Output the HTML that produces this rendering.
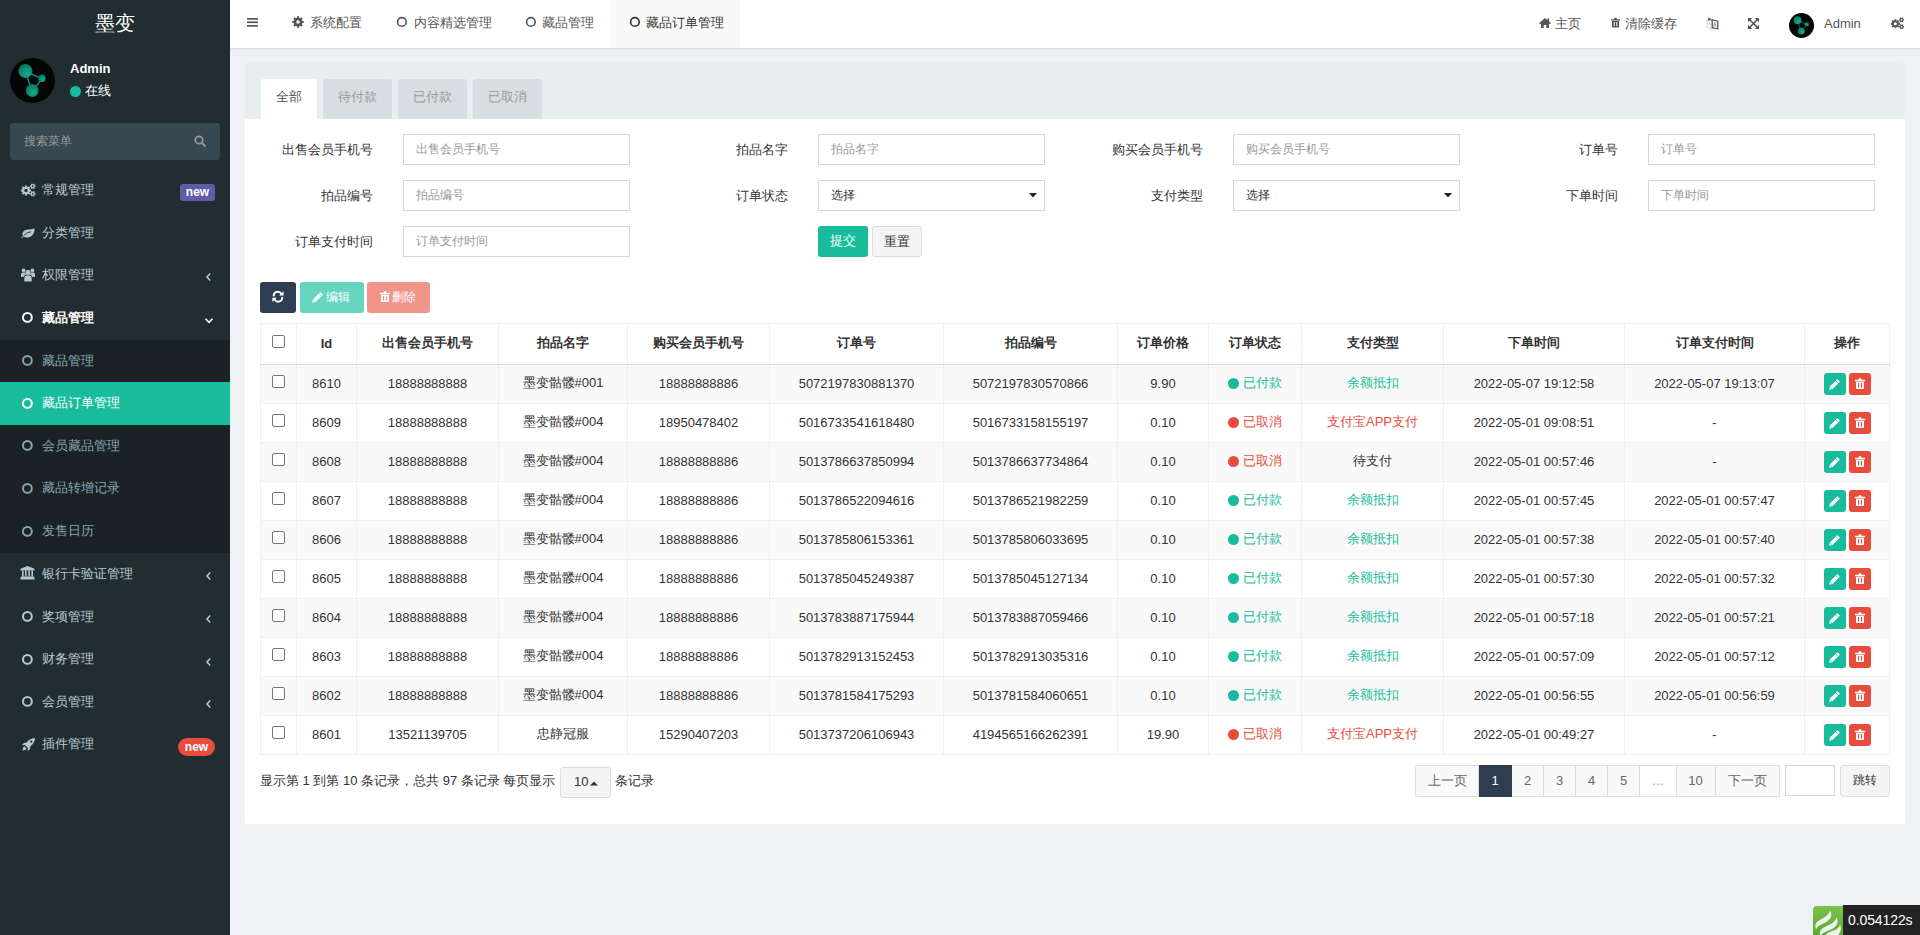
<!DOCTYPE html><html><head><meta charset="utf-8"><style>
*{box-sizing:border-box;margin:0;padding:0}
html,body{width:1920px;height:935px;overflow:hidden}
body{font-family:"Liberation Sans",sans-serif;font-size:13px;color:#333;background:#eff2f5;position:relative}
.a{position:absolute}
svg{display:block}
#sidebar{position:absolute;left:0;top:0;width:230px;height:935px;background:#222d32}
#logo{position:absolute;left:0;top:1px;width:230px;height:48px;line-height:45px;text-align:center;color:#fff;font-size:20px}
.mi{position:absolute;left:0;width:230px;height:43px;color:#b8c7ce;font-size:13px}
.mi .tx{position:absolute;left:42px;top:0;line-height:43px;height:43px;white-space:nowrap}
.mi .ic{position:absolute;left:21px;top:15px}
.sub{color:#8aa4af}
#header{position:absolute;left:230px;top:0;width:1690px;height:48px;background:#fff;box-shadow:0 1px 0 #dde1e5,0 2px 4px rgba(0,0,0,.04)}
.nt{position:absolute;top:0;height:47px;line-height:45px;color:#555;font-size:13px;white-space:nowrap}
#panel{position:absolute;left:245px;top:63px;width:1660px;height:761px;background:#fff;border-radius:3px}
#phead{position:absolute;left:0;top:0;width:1660px;height:56px;background:#e8edf0;border-radius:3px 3px 0 0}
.tab{position:absolute;top:16px;height:40px;line-height:35px;text-align:center;color:#999;background:#d9dee3;border-radius:3px 3px 0 0;font-size:13px}
.lbl{position:absolute;text-align:right;font-size:13px;color:#333;line-height:31px;height:31px;white-space:nowrap}
.inp{position:absolute;width:227px;height:31px;border:1px solid #d2d6de;background:#fff;line-height:29px;padding-left:12px;color:#999;font-size:12px;white-space:nowrap}
.btn{position:absolute;height:31px;line-height:30px;text-align:center;border-radius:3px;font-size:12px;color:#fff;white-space:nowrap}
table{border-collapse:collapse;table-layout:fixed;position:absolute;left:260px;top:323px;width:1629px}
th,td{text-align:center;border:1px solid #f0f0f0;font-size:13px;padding:0 0 2px 0;white-space:nowrap;overflow:hidden}
th{height:41px;font-weight:bold;border-bottom:1px solid #ddd;color:#333}
td{height:39px;color:#333}
tbody tr:nth-child(odd) td{background:#f9f9f9}
.cb{display:inline-block;width:13px;height:13px;border:1px solid #767676;border-radius:2px;background:#fff;vertical-align:middle;position:relative;top:-2px}
thead .cb{top:-3px}
tbody .cb{top:-3px}
.dot{display:inline-block;width:11px;height:11px;border-radius:50%;vertical-align:-2px;margin-right:4px}
.g{color:#18bc9c}.r{color:#e74c3c}
.ab{display:inline-block;width:22px;height:22px;border-radius:3px;vertical-align:middle;position:relative;top:1px}
.pg{position:absolute;top:765px;height:32px;line-height:29px;text-align:center;border:1px solid #ddd;background:#f9f9f9;color:#666;font-size:13px}
</style></head><body>
<div id="sidebar">
<div id="logo">墨变</div>
<svg class="a" style="left:10px;top:58px" width="45" height="45" viewBox="0 0 45 45"><defs><radialGradient id="gg" cx="60%" cy="65%" r="65%"><stop offset="0" stop-color="#13ae8a"/><stop offset="1" stop-color="#0a7560"/></radialGradient></defs><circle cx="22.5" cy="22.5" r="22.5" fill="#050505"/><path d="M16 13.5 L31.5 20.5 L27 27.5 L22 32 L18.5 23 Z" fill="none" stroke="#0e8f73" stroke-width="1.4"/><circle cx="15.4" cy="13" r="7" fill="url(#gg)"/><circle cx="32" cy="20.3" r="3.7" fill="url(#gg)"/><circle cx="22.2" cy="32.5" r="6.4" fill="url(#gg)"/></svg>
<div class="a" style="left:70px;top:60px;color:#fff;font-weight:bold;font-size:13px;line-height:18px">Admin</div>
<div class="a" style="left:70px;top:86px;width:11px;height:11px;border-radius:50%;background:#18bc9c"></div>
<div class="a" style="left:85px;top:82px;color:#fff;font-size:13px;line-height:18px">在线</div>
<div class="a" style="left:10px;top:123px;width:210px;height:37px;background:#374850;border-radius:3px"></div>
<div class="a" style="left:24px;top:123px;line-height:37px;color:#999;font-size:12px">搜索菜单</div>
<svg class="a" style="left:194px;top:134.5px" width="12" height="12" viewBox="0 0 12 12"><circle cx="5" cy="5" r="3.7" fill="none" stroke="#999" stroke-width="1.7"/><path d="M7.7 7.7 L10.8 10.8" stroke="#999" stroke-width="2" stroke-linecap="round"/></svg>
<div class="a" style="left:42px;top:169.0px;line-height:42.6px;color:#b8c7ce;font-size:13px;white-space:nowrap">常规管理</div>
<svg class="a" style="left:20px;top:182.8px" width="16.0" height="14.0" viewBox="0 0 16 14"><path fill-rule="evenodd" fill="#b8c7ce" d="M9.77 6.50 L11.10 6.49 L11.10 8.51 L9.77 8.50 L9.37 9.46 L10.32 10.39 L8.89 11.82 L7.96 10.87 L7.00 11.27 L7.01 12.60 L4.99 12.60 L5.00 11.27 L4.04 10.87 L3.11 11.82 L1.68 10.39 L2.63 9.46 L2.23 8.50 L0.90 8.51 L0.90 6.49 L2.23 6.50 L2.63 5.54 L1.68 4.61 L3.11 3.18 L4.04 4.13 L5.00 3.73 L4.99 2.40 L7.01 2.40 L7.00 3.73 L7.96 4.13 L8.89 3.18 L10.32 4.61 L9.37 5.54 Z M7.70 7.50 A1.7 1.7 0 1 0 4.30 7.50 A1.7 1.7 0 1 0 7.70 7.50 Z M14.78 2.49 L15.60 2.45 L15.60 3.95 L14.78 3.91 L14.40 4.56 L14.85 5.25 L13.55 6.00 L13.17 5.27 L12.43 5.27 L12.05 6.00 L10.75 5.25 L11.20 4.56 L10.82 3.91 L10.00 3.95 L10.00 2.45 L10.82 2.49 L11.20 1.84 L10.75 1.15 L12.05 0.40 L12.43 1.13 L13.17 1.13 L13.55 0.40 L14.85 1.15 L14.40 1.84 Z M13.70 3.20 A0.9 0.9 0 1 0 11.90 3.20 A0.9 0.9 0 1 0 13.70 3.20 Z M14.78 10.09 L15.60 10.05 L15.60 11.55 L14.78 11.51 L14.40 12.16 L14.85 12.85 L13.55 13.60 L13.17 12.87 L12.43 12.87 L12.05 13.60 L10.75 12.85 L11.20 12.16 L10.82 11.51 L10.00 11.55 L10.00 10.05 L10.82 10.09 L11.20 9.44 L10.75 8.75 L12.05 8.00 L12.43 8.73 L13.17 8.73 L13.55 8.00 L14.85 8.75 L14.40 9.44 Z M13.70 10.80 A0.9 0.9 0 1 0 11.90 10.80 A0.9 0.9 0 1 0 13.70 10.80 Z"/></svg>
<div class="a" style="left:180px;top:183.5px;width:35px;height:17px;background:#605ca8;border-radius:3px;color:#fff;font-weight:bold;font-size:12px;line-height:16px;text-align:center">new</div>
<div class="a" style="left:42px;top:211.6px;line-height:42.6px;color:#b8c7ce;font-size:13px;white-space:nowrap">分类管理</div>
<svg class="a" style="left:21px;top:227.9px" width="14" height="11" viewBox="0 0 14 11"><path d="M13.6 0.3 C13.9 5.5 10.5 10 5.5 9.6 C4 9.5 3 9 2.5 8.6 L0.9 10.3 L0.3 9.7 L2 8 C0.8 6 1.8 2.8 5.2 1.8 C8 1 11.5 1.8 13.6 0.3 Z" fill="#b8c7ce"/><path d="M2.8 7.8 C5 5 7.5 4.3 10 3.8" fill="none" stroke="#222d32" stroke-width="0.9"/></svg>
<div class="a" style="left:42px;top:254.1px;line-height:42.6px;color:#b8c7ce;font-size:13px;white-space:nowrap">权限管理</div>
<svg class="a" style="left:21px;top:268.4px" width="14" height="14" viewBox="0 0 14 14"><g fill="#b8c7ce"><circle cx="2.6" cy="2.3" r="1.9"/><circle cx="11.4" cy="2.3" r="1.9"/><circle cx="7" cy="4.4" r="2.5"/><path d="M3.3 13.5 V10.5 C3.3 8.3 4.6 7.3 7 7.3 C9.4 7.3 10.7 8.3 10.7 10.5 V13.5 Z"/><path d="M0 9 V6.5 C0 5 0.8 4.5 2.6 4.5 C3.3 4.5 3.8 4.6 4.2 4.8 C4.3 5.6 4.7 6.3 5.1 6.8 C3.5 7.2 2.7 8 2.6 9 Z"/><path d="M14 9 V6.5 C14 5 13.2 4.5 11.4 4.5 C10.7 4.5 10.2 4.6 9.8 4.8 C9.7 5.6 9.3 6.3 8.9 6.8 C10.5 7.2 11.3 8 11.4 9 Z"/></g></svg>
<svg class="a" style="left:205px;top:272.4px" width="7" height="10" viewBox="0 0 7 10"><path d="M5.2 1.5 L2 5 L5.2 8.5" fill="none" stroke="#b8c7ce" stroke-width="1.5"/></svg>
<div class="a" style="left:42px;top:296.7px;line-height:42.6px;color:#fff;font-size:13px;font-weight:bold;white-space:nowrap">藏品管理</div>
<svg class="a" style="left:21.200000000000003px;top:311.3px" width="12.8" height="12.8"><circle cx="6.4" cy="6.4" r="4.4" fill="none" stroke="#fff" stroke-width="2"/></svg>
<svg class="a" style="left:204px;top:316.5px" width="10" height="8" viewBox="0 0 10 8"><path d="M1.5 1.8 L5 5.3 L8.5 1.8" fill="none" stroke="#fff" stroke-width="1.6"/></svg>
<div class="a" style="left:0;top:339.5px;width:230px;height:213.5px;background:#1a2226"></div>
<div class="a" style="left:42px;top:339.5px;line-height:42.6px;color:#8aa4af;font-size:13px;white-space:nowrap">藏品管理</div>
<svg class="a" style="left:21.200000000000003px;top:354.1px" width="12.8" height="12.8"><circle cx="6.4" cy="6.4" r="4.4" fill="none" stroke="#8aa4af" stroke-width="2"/></svg>
<div class="a" style="left:0;top:382.1px;width:230px;height:42.6px;background:#18bc9c"></div>
<div class="a" style="left:42px;top:382.1px;line-height:42.6px;color:#fff;font-size:13px;white-space:nowrap">藏品订单管理</div>
<svg class="a" style="left:21.200000000000003px;top:396.70000000000005px" width="12.8" height="12.8"><circle cx="6.4" cy="6.4" r="4.4" fill="none" stroke="#fff" stroke-width="2"/></svg>
<div class="a" style="left:42px;top:424.7px;line-height:42.6px;color:#8aa4af;font-size:13px;white-space:nowrap">会员藏品管理</div>
<svg class="a" style="left:21.200000000000003px;top:439.3px" width="12.8" height="12.8"><circle cx="6.4" cy="6.4" r="4.4" fill="none" stroke="#8aa4af" stroke-width="2"/></svg>
<div class="a" style="left:42px;top:467.3px;line-height:42.6px;color:#8aa4af;font-size:13px;white-space:nowrap">藏品转增记录</div>
<svg class="a" style="left:21.200000000000003px;top:481.90000000000003px" width="12.8" height="12.8"><circle cx="6.4" cy="6.4" r="4.4" fill="none" stroke="#8aa4af" stroke-width="2"/></svg>
<div class="a" style="left:42px;top:509.9px;line-height:42.6px;color:#8aa4af;font-size:13px;white-space:nowrap">发售日历</div>
<svg class="a" style="left:21.200000000000003px;top:524.5px" width="12.8" height="12.8"><circle cx="6.4" cy="6.4" r="4.4" fill="none" stroke="#8aa4af" stroke-width="2"/></svg>
<div class="a" style="left:42px;top:553px;line-height:42.6px;color:#b8c7ce;font-size:13px;white-space:nowrap">银行卡验证管理</div>
<svg class="a" style="left:20px;top:566.3px" width="15" height="14" viewBox="0 0 15 14"><g fill="#b8c7ce"><path d="M7.5 0 C9.5 0.8 12 1.9 14.5 2.8 V4.4 H0.5 V2.8 C3 1.9 5.5 0.8 7.5 0 Z"/><rect x="2" y="4.6" width="1.6" height="6"/><rect x="5" y="4.6" width="1.6" height="6"/><rect x="8.3" y="4.6" width="1.6" height="6"/><rect x="11.4" y="4.6" width="1.6" height="6"/><path d="M1.5 10.6 H13.5 L14.5 11.6 V13.5 H0.5 V11.6 Z"/></g></svg>
<svg class="a" style="left:205px;top:571.3px" width="7" height="10" viewBox="0 0 7 10"><path d="M5.2 1.5 L2 5 L5.2 8.5" fill="none" stroke="#b8c7ce" stroke-width="1.5"/></svg>
<div class="a" style="left:42px;top:595.6px;line-height:42.6px;color:#b8c7ce;font-size:13px;white-space:nowrap">奖项管理</div>
<svg class="a" style="left:21.200000000000003px;top:610.2px" width="12.8" height="12.8"><circle cx="6.4" cy="6.4" r="4.4" fill="none" stroke="#b8c7ce" stroke-width="2"/></svg>
<svg class="a" style="left:205px;top:613.9px" width="7" height="10" viewBox="0 0 7 10"><path d="M5.2 1.5 L2 5 L5.2 8.5" fill="none" stroke="#b8c7ce" stroke-width="1.5"/></svg>
<div class="a" style="left:42px;top:638.2px;line-height:42.6px;color:#b8c7ce;font-size:13px;white-space:nowrap">财务管理</div>
<svg class="a" style="left:21.200000000000003px;top:652.8000000000001px" width="12.8" height="12.8"><circle cx="6.4" cy="6.4" r="4.4" fill="none" stroke="#b8c7ce" stroke-width="2"/></svg>
<svg class="a" style="left:205px;top:656.5px" width="7" height="10" viewBox="0 0 7 10"><path d="M5.2 1.5 L2 5 L5.2 8.5" fill="none" stroke="#b8c7ce" stroke-width="1.5"/></svg>
<div class="a" style="left:42px;top:680.8px;line-height:42.6px;color:#b8c7ce;font-size:13px;white-space:nowrap">会员管理</div>
<svg class="a" style="left:21.200000000000003px;top:695.4px" width="12.8" height="12.8"><circle cx="6.4" cy="6.4" r="4.4" fill="none" stroke="#b8c7ce" stroke-width="2"/></svg>
<svg class="a" style="left:205px;top:699.0999999999999px" width="7" height="10" viewBox="0 0 7 10"><path d="M5.2 1.5 L2 5 L5.2 8.5" fill="none" stroke="#b8c7ce" stroke-width="1.5"/></svg>
<div class="a" style="left:42px;top:723.4px;line-height:42.6px;color:#b8c7ce;font-size:13px;white-space:nowrap">插件管理</div>
<svg class="a" style="left:21.5px;top:738.1999999999999px" width="13" height="13" viewBox="0 0 13 13"><g fill="#b8c7ce"><path d="M13 0 C9 0.2 6.5 2 4.6 4.6 L1.8 4.9 L0 7.2 L2.9 7 L5.9 10 L5.6 13 L8 11.2 L8.3 8.3 C11 6.4 12.8 4 13 0 Z"/><path d="M2.4 8.3 L4.6 10.5 C4 11.8 2.6 12.4 0.6 12.4 C0.6 10.4 1.1 9 2.4 8.3 Z"/></g><circle cx="9.3" cy="3.7" r="1.1" fill="#222d32"/></svg>
<div class="a" style="left:178px;top:738.1999999999999px;width:37px;height:18px;background:#e74c3c;border-radius:9px;color:#fff;font-weight:bold;font-size:12px;line-height:19px;text-align:center">new</div>
</div>
<div id="header"></div>
<div class="a" style="left:611px;top:0;width:129px;height:48px;background:#f9f9f9"></div>
<svg class="a" style="left:247px;top:17px" width="11" height="11" viewBox="0 0 11 11"><g fill="#555"><rect y="1" width="11" height="1.7"/><rect y="4.4" width="11" height="1.7"/><rect y="8" width="11" height="1.7"/></g></svg>
<svg class="a" style="left:292.3px;top:16.4px" width="12" height="12" viewBox="0 0 12 12"><path fill-rule="evenodd" fill="#555" d="M10.27 4.96 L11.71 4.98 L11.71 7.02 L10.27 7.04 L9.76 8.28 L10.76 9.32 L9.32 10.76 L8.28 9.76 L7.04 10.27 L7.02 11.71 L4.98 11.71 L4.96 10.27 L3.72 9.76 L2.68 10.76 L1.24 9.32 L2.24 8.28 L1.73 7.04 L0.29 7.02 L0.29 4.98 L1.73 4.96 L2.24 3.72 L1.24 2.68 L2.68 1.24 L3.72 2.24 L4.96 1.73 L4.98 0.29 L7.02 0.29 L7.04 1.73 L8.28 2.24 L9.32 1.24 L10.76 2.68 L9.76 3.72 Z M7.70 6.00 A1.7 1.7 0 1 0 4.30 6.00 A1.7 1.7 0 1 0 7.70 6.00 Z"/></svg>
<div class="nt" style="left:310px">系统配置</div>
<svg class="a" style="left:395.59999999999997px;top:16.099999999999998px" width="11.8" height="11.8"><circle cx="5.9" cy="5.9" r="4.3" fill="none" stroke="#555" stroke-width="1.6"/></svg>
<div class="nt" style="left:414px">内容精选管理</div>
<svg class="a" style="left:525.1px;top:16.099999999999998px" width="11.8" height="11.8"><circle cx="5.9" cy="5.9" r="4.3" fill="none" stroke="#555" stroke-width="1.6"/></svg>
<div class="nt" style="left:542px">藏品管理</div>
<svg class="a" style="left:628.6px;top:16.099999999999998px" width="11.8" height="11.8"><circle cx="5.9" cy="5.9" r="4.3" fill="none" stroke="#333" stroke-width="1.6"/></svg>
<div class="nt" style="left:646px;color:#333">藏品订单管理</div>
<svg class="a" style="left:1539px;top:18px" width="12" height="10" viewBox="0 0 12 10"><path d="M6 0 L8.6 2.3 V0.3 H10.2 V3.7 L12 5.2 L10.8 6.2 L10 5.5 V10 H7.3 V7 H4.7 V10 H2 V5.5 L1.2 6.2 L0 5.2 Z" fill="#555"/></svg>
<div class="nt" style="left:1555px;top:1px">主页</div>
<svg class="a" style="left:1611px;top:17px" width="9" height="11" viewBox="0 0 10 11"><g fill="#555"><path d="M3.3 1.8 L4 0.3 H6 L6.7 1.8 H10 V3.2 H0 V1.8 Z"/><path d="M1 3.8 H9 V10.2 Q9 11 8.2 11 H1.8 Q1 11 1 10.2 Z"/></g><g fill="#fff"><rect x="3" y="5" width="1.1" height="4.6"/><rect x="5.9" y="5" width="1.1" height="4.6"/></g></svg>
<div class="nt" style="left:1625px;top:1px">清除缓存</div>
<svg class="a" style="left:1706px;top:16.5px" width="13" height="14" viewBox="0 0 13 14"><rect x="1" y="3.5" width="5.5" height="7.5" fill="none" stroke="#c8c8d8" stroke-width="0.8"/><path d="M2 5.2 L3.8 4.8 M2.8 7.5 L4 6 L5 8.3" fill="none" stroke="#c8b8b0" stroke-width="0.6"/><path d="M1.8 0.5 L6.5 2.6 L2 3.4 Z" fill="#6b5a55"/><path d="M6.2 2.8 L11.8 4.2 V11.8 L6.2 10.6 Z" fill="none" stroke="#555" stroke-width="1.3"/><path d="M7.6 9.6 L8.9 5.4 L10.3 9.8 M8.1 8.2 H9.8" fill="none" stroke="#6a8fb0" stroke-width="0.8"/><path d="M4 12.8 Q6.5 13.6 8.5 12.3" fill="none" stroke="#c8b8d0" stroke-width="0.6"/></svg>
<svg class="a" style="left:1748px;top:18px" width="11" height="11" viewBox="0 0 11 11"><g fill="#555"><path d="M0 0 H4.2 L0 4.2 Z"/><path d="M11 0 V4.2 L6.8 0 Z"/><path d="M0 11 V6.8 L4.2 11 Z"/><path d="M11 11 H6.8 L11 6.8 Z"/></g><path d="M1.5 1.5 L9.5 9.5 M9.5 1.5 L1.5 9.5" stroke="#555" stroke-width="1.6"/></svg>
<svg class="a" style="left:1789px;top:13px" width="25" height="25" viewBox="0 0 45 45"><defs><radialGradient id="gg" cx="60%" cy="65%" r="65%"><stop offset="0" stop-color="#13ae8a"/><stop offset="1" stop-color="#0a7560"/></radialGradient></defs><circle cx="22.5" cy="22.5" r="22.5" fill="#050505"/><path d="M16 13.5 L31.5 20.5 L27 27.5 L22 32 L18.5 23 Z" fill="none" stroke="#0e8f73" stroke-width="1.4"/><circle cx="15.4" cy="13" r="7" fill="url(#gg)"/><circle cx="32" cy="20.3" r="3.7" fill="url(#gg)"/><circle cx="22.2" cy="32.5" r="6.4" fill="url(#gg)"/></svg>
<div class="nt" style="left:1824px;top:0.5px;font-size:13px">Admin</div>
<svg class="a" style="left:1890px;top:17px" width="14.4" height="12.6" viewBox="0 0 16 14"><path fill-rule="evenodd" fill="#555" d="M9.77 6.50 L11.10 6.49 L11.10 8.51 L9.77 8.50 L9.37 9.46 L10.32 10.39 L8.89 11.82 L7.96 10.87 L7.00 11.27 L7.01 12.60 L4.99 12.60 L5.00 11.27 L4.04 10.87 L3.11 11.82 L1.68 10.39 L2.63 9.46 L2.23 8.50 L0.90 8.51 L0.90 6.49 L2.23 6.50 L2.63 5.54 L1.68 4.61 L3.11 3.18 L4.04 4.13 L5.00 3.73 L4.99 2.40 L7.01 2.40 L7.00 3.73 L7.96 4.13 L8.89 3.18 L10.32 4.61 L9.37 5.54 Z M7.70 7.50 A1.7 1.7 0 1 0 4.30 7.50 A1.7 1.7 0 1 0 7.70 7.50 Z M14.78 2.49 L15.60 2.45 L15.60 3.95 L14.78 3.91 L14.40 4.56 L14.85 5.25 L13.55 6.00 L13.17 5.27 L12.43 5.27 L12.05 6.00 L10.75 5.25 L11.20 4.56 L10.82 3.91 L10.00 3.95 L10.00 2.45 L10.82 2.49 L11.20 1.84 L10.75 1.15 L12.05 0.40 L12.43 1.13 L13.17 1.13 L13.55 0.40 L14.85 1.15 L14.40 1.84 Z M13.70 3.20 A0.9 0.9 0 1 0 11.90 3.20 A0.9 0.9 0 1 0 13.70 3.20 Z M14.78 10.09 L15.60 10.05 L15.60 11.55 L14.78 11.51 L14.40 12.16 L14.85 12.85 L13.55 13.60 L13.17 12.87 L12.43 12.87 L12.05 13.60 L10.75 12.85 L11.20 12.16 L10.82 11.51 L10.00 11.55 L10.00 10.05 L10.82 10.09 L11.20 9.44 L10.75 8.75 L12.05 8.00 L12.43 8.73 L13.17 8.73 L13.55 8.00 L14.85 8.75 L14.40 9.44 Z M13.70 10.80 A0.9 0.9 0 1 0 11.90 10.80 A0.9 0.9 0 1 0 13.70 10.80 Z"/></svg>
<div id="panel"><div id="phead"></div></div>
<div class="tab" style="left:260.8px;top:79px;width:56.2px;background:#fff;color:#555;">全部</div>
<div class="tab" style="left:323px;top:79px;width:69px;">待付款</div>
<div class="tab" style="left:398px;top:79px;width:69px;">已付款</div>
<div class="tab" style="left:473px;top:79px;width:69px;">已取消</div>
<div class="lbl" style="left:213px;width:160px;top:134px">出售会员手机号</div>
<div class="inp" style="left:403px;top:134px">出售会员手机号</div>
<div class="lbl" style="left:628px;width:160px;top:134px">拍品名字</div>
<div class="inp" style="left:818px;top:134px">拍品名字</div>
<div class="lbl" style="left:1043px;width:160px;top:134px">购买会员手机号</div>
<div class="inp" style="left:1233px;top:134px">购买会员手机号</div>
<div class="lbl" style="left:1458px;width:160px;top:134px">订单号</div>
<div class="inp" style="left:1648px;top:134px">订单号</div>
<div class="lbl" style="left:213px;width:160px;top:180px">拍品编号</div>
<div class="inp" style="left:403px;top:180px">拍品编号</div>
<div class="lbl" style="left:628px;width:160px;top:180px">订单状态</div>
<div class="inp" style="left:818px;top:180px;color:#333">选择</div>
<svg class="a" style="left:1029px;top:193px" width="8" height="5" viewBox="0 0 8 5"><path d="M0 0 H8 L4 4.5 Z" fill="#222"/></svg>
<div class="lbl" style="left:1043px;width:160px;top:180px">支付类型</div>
<div class="inp" style="left:1233px;top:180px;color:#333">选择</div>
<svg class="a" style="left:1444px;top:193px" width="8" height="5" viewBox="0 0 8 5"><path d="M0 0 H8 L4 4.5 Z" fill="#222"/></svg>
<div class="lbl" style="left:1458px;width:160px;top:180px">下单时间</div>
<div class="inp" style="left:1648px;top:180px">下单时间</div>
<div class="lbl" style="left:213px;width:160px;top:226px">订单支付时间</div>
<div class="inp" style="left:403px;top:226px">订单支付时间</div>
<div class="btn" style="left:818px;top:226px;width:50px;background:#18bc9c;font-size:13px">提交</div>
<div class="btn" style="left:872px;top:226px;width:50px;background:#f4f4f4;border:1px solid #ddd;color:#333;font-size:13px">重置</div>
<div class="btn" style="left:260px;top:282px;width:36px;background:#2c3e50"></div>
<svg class="a" style="left:272px;top:291px" width="12" height="12" viewBox="0 0 12 12"><g><path d="M1.8 5.3 A4 4 0 0 1 9.6 3.6" fill="none" stroke="#fff" stroke-width="2"/><path d="M11.6 0.3 V4.6 H7.2 Z" fill="#fff"/></g><g transform="rotate(180 6 5.65)"><path d="M1.8 5.3 A4 4 0 0 1 9.6 3.6" fill="none" stroke="#fff" stroke-width="2"/><path d="M11.6 0.3 V4.6 H7.2 Z" fill="#fff"/></g></svg>
<div class="btn" style="left:300px;top:282px;width:64px;background:#65d5bf"></div>
<svg class="a" style="left:312px;top:291.5px" width="11" height="11" viewBox="0 0 11 11"><path d="M0.3 10.7 L0.9 7.4 L7.9 0.4 Q8.3 0 8.7 0.4 L10.6 2.3 Q11 2.7 10.6 3.1 L3.6 10.1 Z M6.9 1.4 L9.6 4.1" fill="#fff"/><path d="M6.7 1.6 L9.4 4.3" stroke-width="0.7" stroke="#65d5bf" fill="none"/><path d="M1.3 8 L3 9.7" stroke-width="0.6" stroke="#65d5bf" fill="none"/></svg>
<div class="a" style="left:326px;top:282px;line-height:31px;color:#fff;font-size:12px">编辑</div>
<div class="btn" style="left:367px;top:282px;width:63px;background:#f1958b"></div>
<svg class="a" style="left:380px;top:291px" width="10" height="11" viewBox="0 0 10 11"><g fill="#fff"><path d="M3.3 1.8 L4 0.3 H6 L6.7 1.8 H10 V3.2 H0 V1.8 Z"/><path d="M1 3.8 H9 V10.2 Q9 11 8.2 11 H1.8 Q1 11 1 10.2 Z"/></g><g fill="#f1958b"><rect x="3" y="5" width="1.1" height="4.6"/><rect x="5.9" y="5" width="1.1" height="4.6"/></g></svg>
<div class="a" style="left:392px;top:282px;line-height:31px;color:#fff;font-size:12px">删除</div>
<table><colgroup><col style="width:36px"><col style="width:60px"><col style="width:142px"><col style="width:129px"><col style="width:142px"><col style="width:174px"><col style="width:174px"><col style="width:91px"><col style="width:93px"><col style="width:142px"><col style="width:181px"><col style="width:180px"><col style="width:85px"></colgroup>
<thead><tr><th><span class=cb></span></th><th>Id</th><th>出售会员手机号</th><th>拍品名字</th><th>购买会员手机号</th><th>订单号</th><th>拍品编号</th><th>订单价格</th><th>订单状态</th><th>支付类型</th><th>下单时间</th><th>订单支付时间</th><th>操作</th></tr></thead><tbody>
<tr><td><span class="cb"></span></td><td>8610</td><td>18888888888</td><td>墨变骷髅#001</td><td>18888888886</td><td>5072197830881370</td><td>5072197830570866</td><td>9.90</td><td><span class="dot" style="background:#18bc9c"></span><span class="g">已付款</span></td><td><span class="g">余额抵扣</span></td><td>2022-05-07 19:12:58</td><td>2022-05-07 19:13:07</td><td><span class="ab" style="background:#18bc9c"><svg class="a" style="left:5px;top:5.5px" width="11" height="11" viewBox="0 0 11 11"><path d="M0.3 10.7 L0.9 7.4 L7.9 0.4 Q8.3 0 8.7 0.4 L10.6 2.3 Q11 2.7 10.6 3.1 L3.6 10.1 Z M6.9 1.4 L9.6 4.1" fill="#fff"/><path d="M6.7 1.6 L9.4 4.3" stroke-width="0.7" stroke="#18bc9c" fill="none"/><path d="M1.3 8 L3 9.7" stroke-width="0.6" stroke="#18bc9c" fill="none"/></svg></span><span class="ab" style="background:#e74c3c;margin-left:3px"><svg class="a" style="left:6px;top:4.5px" width="10" height="11" viewBox="0 0 10 11"><g fill="#fff"><path d="M3.3 1.8 L4 0.3 H6 L6.7 1.8 H10 V3.2 H0 V1.8 Z"/><path d="M1 3.8 H9 V10.2 Q9 11 8.2 11 H1.8 Q1 11 1 10.2 Z"/></g><g fill="#e74c3c"><rect x="3" y="5" width="1.1" height="4.6"/><rect x="5.9" y="5" width="1.1" height="4.6"/></g></svg></span></td></tr>
<tr><td><span class="cb"></span></td><td>8609</td><td>18888888888</td><td>墨变骷髅#004</td><td>18950478402</td><td>5016733541618480</td><td>5016733158155197</td><td>0.10</td><td><span class="dot" style="background:#e74c3c"></span><span class="r">已取消</span></td><td><span class="r">支付宝APP支付</span></td><td>2022-05-01 09:08:51</td><td>-</td><td><span class="ab" style="background:#18bc9c"><svg class="a" style="left:5px;top:5.5px" width="11" height="11" viewBox="0 0 11 11"><path d="M0.3 10.7 L0.9 7.4 L7.9 0.4 Q8.3 0 8.7 0.4 L10.6 2.3 Q11 2.7 10.6 3.1 L3.6 10.1 Z M6.9 1.4 L9.6 4.1" fill="#fff"/><path d="M6.7 1.6 L9.4 4.3" stroke-width="0.7" stroke="#18bc9c" fill="none"/><path d="M1.3 8 L3 9.7" stroke-width="0.6" stroke="#18bc9c" fill="none"/></svg></span><span class="ab" style="background:#e74c3c;margin-left:3px"><svg class="a" style="left:6px;top:4.5px" width="10" height="11" viewBox="0 0 10 11"><g fill="#fff"><path d="M3.3 1.8 L4 0.3 H6 L6.7 1.8 H10 V3.2 H0 V1.8 Z"/><path d="M1 3.8 H9 V10.2 Q9 11 8.2 11 H1.8 Q1 11 1 10.2 Z"/></g><g fill="#e74c3c"><rect x="3" y="5" width="1.1" height="4.6"/><rect x="5.9" y="5" width="1.1" height="4.6"/></g></svg></span></td></tr>
<tr><td><span class="cb"></span></td><td>8608</td><td>18888888888</td><td>墨变骷髅#004</td><td>18888888886</td><td>5013786637850994</td><td>5013786637734864</td><td>0.10</td><td><span class="dot" style="background:#e74c3c"></span><span class="r">已取消</span></td><td>待支付</td><td>2022-05-01 00:57:46</td><td>-</td><td><span class="ab" style="background:#18bc9c"><svg class="a" style="left:5px;top:5.5px" width="11" height="11" viewBox="0 0 11 11"><path d="M0.3 10.7 L0.9 7.4 L7.9 0.4 Q8.3 0 8.7 0.4 L10.6 2.3 Q11 2.7 10.6 3.1 L3.6 10.1 Z M6.9 1.4 L9.6 4.1" fill="#fff"/><path d="M6.7 1.6 L9.4 4.3" stroke-width="0.7" stroke="#18bc9c" fill="none"/><path d="M1.3 8 L3 9.7" stroke-width="0.6" stroke="#18bc9c" fill="none"/></svg></span><span class="ab" style="background:#e74c3c;margin-left:3px"><svg class="a" style="left:6px;top:4.5px" width="10" height="11" viewBox="0 0 10 11"><g fill="#fff"><path d="M3.3 1.8 L4 0.3 H6 L6.7 1.8 H10 V3.2 H0 V1.8 Z"/><path d="M1 3.8 H9 V10.2 Q9 11 8.2 11 H1.8 Q1 11 1 10.2 Z"/></g><g fill="#e74c3c"><rect x="3" y="5" width="1.1" height="4.6"/><rect x="5.9" y="5" width="1.1" height="4.6"/></g></svg></span></td></tr>
<tr><td><span class="cb"></span></td><td>8607</td><td>18888888888</td><td>墨变骷髅#004</td><td>18888888886</td><td>5013786522094616</td><td>5013786521982259</td><td>0.10</td><td><span class="dot" style="background:#18bc9c"></span><span class="g">已付款</span></td><td><span class="g">余额抵扣</span></td><td>2022-05-01 00:57:45</td><td>2022-05-01 00:57:47</td><td><span class="ab" style="background:#18bc9c"><svg class="a" style="left:5px;top:5.5px" width="11" height="11" viewBox="0 0 11 11"><path d="M0.3 10.7 L0.9 7.4 L7.9 0.4 Q8.3 0 8.7 0.4 L10.6 2.3 Q11 2.7 10.6 3.1 L3.6 10.1 Z M6.9 1.4 L9.6 4.1" fill="#fff"/><path d="M6.7 1.6 L9.4 4.3" stroke-width="0.7" stroke="#18bc9c" fill="none"/><path d="M1.3 8 L3 9.7" stroke-width="0.6" stroke="#18bc9c" fill="none"/></svg></span><span class="ab" style="background:#e74c3c;margin-left:3px"><svg class="a" style="left:6px;top:4.5px" width="10" height="11" viewBox="0 0 10 11"><g fill="#fff"><path d="M3.3 1.8 L4 0.3 H6 L6.7 1.8 H10 V3.2 H0 V1.8 Z"/><path d="M1 3.8 H9 V10.2 Q9 11 8.2 11 H1.8 Q1 11 1 10.2 Z"/></g><g fill="#e74c3c"><rect x="3" y="5" width="1.1" height="4.6"/><rect x="5.9" y="5" width="1.1" height="4.6"/></g></svg></span></td></tr>
<tr><td><span class="cb"></span></td><td>8606</td><td>18888888888</td><td>墨变骷髅#004</td><td>18888888886</td><td>5013785806153361</td><td>5013785806033695</td><td>0.10</td><td><span class="dot" style="background:#18bc9c"></span><span class="g">已付款</span></td><td><span class="g">余额抵扣</span></td><td>2022-05-01 00:57:38</td><td>2022-05-01 00:57:40</td><td><span class="ab" style="background:#18bc9c"><svg class="a" style="left:5px;top:5.5px" width="11" height="11" viewBox="0 0 11 11"><path d="M0.3 10.7 L0.9 7.4 L7.9 0.4 Q8.3 0 8.7 0.4 L10.6 2.3 Q11 2.7 10.6 3.1 L3.6 10.1 Z M6.9 1.4 L9.6 4.1" fill="#fff"/><path d="M6.7 1.6 L9.4 4.3" stroke-width="0.7" stroke="#18bc9c" fill="none"/><path d="M1.3 8 L3 9.7" stroke-width="0.6" stroke="#18bc9c" fill="none"/></svg></span><span class="ab" style="background:#e74c3c;margin-left:3px"><svg class="a" style="left:6px;top:4.5px" width="10" height="11" viewBox="0 0 10 11"><g fill="#fff"><path d="M3.3 1.8 L4 0.3 H6 L6.7 1.8 H10 V3.2 H0 V1.8 Z"/><path d="M1 3.8 H9 V10.2 Q9 11 8.2 11 H1.8 Q1 11 1 10.2 Z"/></g><g fill="#e74c3c"><rect x="3" y="5" width="1.1" height="4.6"/><rect x="5.9" y="5" width="1.1" height="4.6"/></g></svg></span></td></tr>
<tr><td><span class="cb"></span></td><td>8605</td><td>18888888888</td><td>墨变骷髅#004</td><td>18888888886</td><td>5013785045249387</td><td>5013785045127134</td><td>0.10</td><td><span class="dot" style="background:#18bc9c"></span><span class="g">已付款</span></td><td><span class="g">余额抵扣</span></td><td>2022-05-01 00:57:30</td><td>2022-05-01 00:57:32</td><td><span class="ab" style="background:#18bc9c"><svg class="a" style="left:5px;top:5.5px" width="11" height="11" viewBox="0 0 11 11"><path d="M0.3 10.7 L0.9 7.4 L7.9 0.4 Q8.3 0 8.7 0.4 L10.6 2.3 Q11 2.7 10.6 3.1 L3.6 10.1 Z M6.9 1.4 L9.6 4.1" fill="#fff"/><path d="M6.7 1.6 L9.4 4.3" stroke-width="0.7" stroke="#18bc9c" fill="none"/><path d="M1.3 8 L3 9.7" stroke-width="0.6" stroke="#18bc9c" fill="none"/></svg></span><span class="ab" style="background:#e74c3c;margin-left:3px"><svg class="a" style="left:6px;top:4.5px" width="10" height="11" viewBox="0 0 10 11"><g fill="#fff"><path d="M3.3 1.8 L4 0.3 H6 L6.7 1.8 H10 V3.2 H0 V1.8 Z"/><path d="M1 3.8 H9 V10.2 Q9 11 8.2 11 H1.8 Q1 11 1 10.2 Z"/></g><g fill="#e74c3c"><rect x="3" y="5" width="1.1" height="4.6"/><rect x="5.9" y="5" width="1.1" height="4.6"/></g></svg></span></td></tr>
<tr><td><span class="cb"></span></td><td>8604</td><td>18888888888</td><td>墨变骷髅#004</td><td>18888888886</td><td>5013783887175944</td><td>5013783887059466</td><td>0.10</td><td><span class="dot" style="background:#18bc9c"></span><span class="g">已付款</span></td><td><span class="g">余额抵扣</span></td><td>2022-05-01 00:57:18</td><td>2022-05-01 00:57:21</td><td><span class="ab" style="background:#18bc9c"><svg class="a" style="left:5px;top:5.5px" width="11" height="11" viewBox="0 0 11 11"><path d="M0.3 10.7 L0.9 7.4 L7.9 0.4 Q8.3 0 8.7 0.4 L10.6 2.3 Q11 2.7 10.6 3.1 L3.6 10.1 Z M6.9 1.4 L9.6 4.1" fill="#fff"/><path d="M6.7 1.6 L9.4 4.3" stroke-width="0.7" stroke="#18bc9c" fill="none"/><path d="M1.3 8 L3 9.7" stroke-width="0.6" stroke="#18bc9c" fill="none"/></svg></span><span class="ab" style="background:#e74c3c;margin-left:3px"><svg class="a" style="left:6px;top:4.5px" width="10" height="11" viewBox="0 0 10 11"><g fill="#fff"><path d="M3.3 1.8 L4 0.3 H6 L6.7 1.8 H10 V3.2 H0 V1.8 Z"/><path d="M1 3.8 H9 V10.2 Q9 11 8.2 11 H1.8 Q1 11 1 10.2 Z"/></g><g fill="#e74c3c"><rect x="3" y="5" width="1.1" height="4.6"/><rect x="5.9" y="5" width="1.1" height="4.6"/></g></svg></span></td></tr>
<tr><td><span class="cb"></span></td><td>8603</td><td>18888888888</td><td>墨变骷髅#004</td><td>18888888886</td><td>5013782913152453</td><td>5013782913035316</td><td>0.10</td><td><span class="dot" style="background:#18bc9c"></span><span class="g">已付款</span></td><td><span class="g">余额抵扣</span></td><td>2022-05-01 00:57:09</td><td>2022-05-01 00:57:12</td><td><span class="ab" style="background:#18bc9c"><svg class="a" style="left:5px;top:5.5px" width="11" height="11" viewBox="0 0 11 11"><path d="M0.3 10.7 L0.9 7.4 L7.9 0.4 Q8.3 0 8.7 0.4 L10.6 2.3 Q11 2.7 10.6 3.1 L3.6 10.1 Z M6.9 1.4 L9.6 4.1" fill="#fff"/><path d="M6.7 1.6 L9.4 4.3" stroke-width="0.7" stroke="#18bc9c" fill="none"/><path d="M1.3 8 L3 9.7" stroke-width="0.6" stroke="#18bc9c" fill="none"/></svg></span><span class="ab" style="background:#e74c3c;margin-left:3px"><svg class="a" style="left:6px;top:4.5px" width="10" height="11" viewBox="0 0 10 11"><g fill="#fff"><path d="M3.3 1.8 L4 0.3 H6 L6.7 1.8 H10 V3.2 H0 V1.8 Z"/><path d="M1 3.8 H9 V10.2 Q9 11 8.2 11 H1.8 Q1 11 1 10.2 Z"/></g><g fill="#e74c3c"><rect x="3" y="5" width="1.1" height="4.6"/><rect x="5.9" y="5" width="1.1" height="4.6"/></g></svg></span></td></tr>
<tr><td><span class="cb"></span></td><td>8602</td><td>18888888888</td><td>墨变骷髅#004</td><td>18888888886</td><td>5013781584175293</td><td>5013781584060651</td><td>0.10</td><td><span class="dot" style="background:#18bc9c"></span><span class="g">已付款</span></td><td><span class="g">余额抵扣</span></td><td>2022-05-01 00:56:55</td><td>2022-05-01 00:56:59</td><td><span class="ab" style="background:#18bc9c"><svg class="a" style="left:5px;top:5.5px" width="11" height="11" viewBox="0 0 11 11"><path d="M0.3 10.7 L0.9 7.4 L7.9 0.4 Q8.3 0 8.7 0.4 L10.6 2.3 Q11 2.7 10.6 3.1 L3.6 10.1 Z M6.9 1.4 L9.6 4.1" fill="#fff"/><path d="M6.7 1.6 L9.4 4.3" stroke-width="0.7" stroke="#18bc9c" fill="none"/><path d="M1.3 8 L3 9.7" stroke-width="0.6" stroke="#18bc9c" fill="none"/></svg></span><span class="ab" style="background:#e74c3c;margin-left:3px"><svg class="a" style="left:6px;top:4.5px" width="10" height="11" viewBox="0 0 10 11"><g fill="#fff"><path d="M3.3 1.8 L4 0.3 H6 L6.7 1.8 H10 V3.2 H0 V1.8 Z"/><path d="M1 3.8 H9 V10.2 Q9 11 8.2 11 H1.8 Q1 11 1 10.2 Z"/></g><g fill="#e74c3c"><rect x="3" y="5" width="1.1" height="4.6"/><rect x="5.9" y="5" width="1.1" height="4.6"/></g></svg></span></td></tr>
<tr><td><span class="cb"></span></td><td>8601</td><td>13521139705</td><td>忠静冠服</td><td>15290407203</td><td>5013737206106943</td><td>4194565166262391</td><td>19.90</td><td><span class="dot" style="background:#e74c3c"></span><span class="r">已取消</span></td><td><span class="r">支付宝APP支付</span></td><td>2022-05-01 00:49:27</td><td>-</td><td><span class="ab" style="background:#18bc9c"><svg class="a" style="left:5px;top:5.5px" width="11" height="11" viewBox="0 0 11 11"><path d="M0.3 10.7 L0.9 7.4 L7.9 0.4 Q8.3 0 8.7 0.4 L10.6 2.3 Q11 2.7 10.6 3.1 L3.6 10.1 Z M6.9 1.4 L9.6 4.1" fill="#fff"/><path d="M6.7 1.6 L9.4 4.3" stroke-width="0.7" stroke="#18bc9c" fill="none"/><path d="M1.3 8 L3 9.7" stroke-width="0.6" stroke="#18bc9c" fill="none"/></svg></span><span class="ab" style="background:#e74c3c;margin-left:3px"><svg class="a" style="left:6px;top:4.5px" width="10" height="11" viewBox="0 0 10 11"><g fill="#fff"><path d="M3.3 1.8 L4 0.3 H6 L6.7 1.8 H10 V3.2 H0 V1.8 Z"/><path d="M1 3.8 H9 V10.2 Q9 11 8.2 11 H1.8 Q1 11 1 10.2 Z"/></g><g fill="#e74c3c"><rect x="3" y="5" width="1.1" height="4.6"/><rect x="5.9" y="5" width="1.1" height="4.6"/></g></svg></span></td></tr>
</tbody></table>
<div class="a" style="left:260px;top:772px;line-height:18px;font-size:13px;color:#333;white-space:nowrap">显示第 1 到第 10 条记录，总共 97 条记录 每页显示</div>
<div class="a" style="left:560px;top:767px;width:51px;height:31px;border:1px solid #ddd;background:#f4f4f4;border-radius:3px"></div>
<div class="a" style="left:574px;top:773px;line-height:18px;font-size:13px;color:#333">10</div>
<svg class="a" style="left:590px;top:781px" width="8" height="5" viewBox="0 0 8 5"><path d="M0 4.5 H8 L4 0.5 Z" fill="#333"/></svg>
<div class="a" style="left:615px;top:772px;line-height:18px;font-size:13px;color:#333">条记录</div>
<div class="pg" style="left:1415.4px;width:63.59999999999991px;border-radius:3px 0 0 3px;">上一页</div>
<div class="pg" style="left:1479px;width:33px;border-left:none;background:#2c3e50;border-color:#2c3e50;color:#fff;">1</div>
<div class="pg" style="left:1512px;width:32px;border-left:none;">2</div>
<div class="pg" style="left:1544px;width:32px;border-left:none;">3</div>
<div class="pg" style="left:1576px;width:32px;border-left:none;">4</div>
<div class="pg" style="left:1608px;width:32px;border-left:none;">5</div>
<div class="pg" style="left:1640px;width:36.5px;border-left:none;background:#fff;color:#999;">...</div>
<div class="pg" style="left:1676.5px;width:39.0px;border-left:none;">10</div>
<div class="pg" style="left:1715.5px;width:64.5px;border-left:none;">下一页</div>
<div class="a" style="left:1785px;top:765px;width:50px;height:31px;border:1px solid #d2d6de;background:#fff"></div>
<div class="pg" style="left:1840px;width:50px;border-radius:3px;background:#f4f4f4;color:#333;font-size:12px;line-height:28px">跳转</div>
<svg class="a" style="left:1813px;top:906px" width="30" height="29" viewBox="0 0 30 29"><defs><linearGradient id="tg" x1="0" y1="0" x2="0" y2="1"><stop offset="0" stop-color="#7cc24a"/><stop offset="1" stop-color="#5fa83a"/></linearGradient></defs><path d="M4 0 H30 V29 H0 V4 Q0 0 4 0 Z" fill="url(#tg)"/><g fill="#eef2ea"><path d="M2.2 20 C3 14 10 13 13.5 10 C15.5 8.2 16.5 6.5 17.1 4.6 C19.5 8.5 18.5 12.5 14 15.5 C10 18 4.5 19.5 3.2 23.3 C2.5 22.5 2.2 21.2 2.2 20 Z"/><path d="M6.8 27 C7.5 21.5 14 20 18.5 17.5 C21 16 22.7 14 23.6 11.2 C25.8 15.5 24.5 19.5 20 22.5 C16 25 10 26 8.2 29 H7.2 C6.9 28.4 6.8 27.7 6.8 27 Z"/><path d="M13 29 C14.5 26 19 25.5 23 23.5 C25 22.5 26.3 21 27 18.6 C28.8 22 28 25.5 25.5 29 Z"/></g></svg>
<div class="a" style="left:1843px;top:905px;width:77px;height:30px;background:#232323;color:#fff;font-size:14px;line-height:30px;padding-left:5px;letter-spacing:-0.1px">0.054122s</div>
</body></html>
